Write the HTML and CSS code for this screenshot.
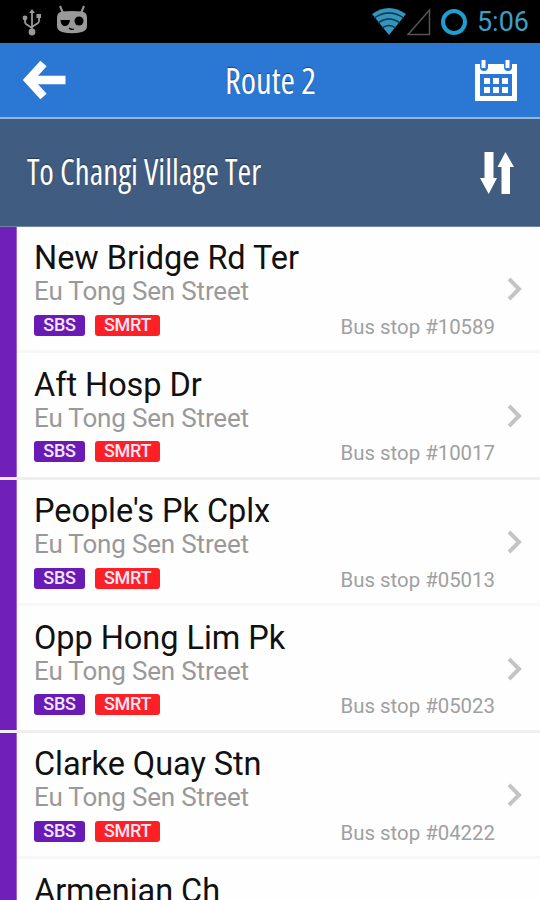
FILE: index.html
```html
<!DOCTYPE html>
<html lang="en">
<head>
    <meta charset="utf-8">
    <title>Route 2</title>
    <link rel="stylesheet" href="styles.css">
</head>
<body>
    <div class="status-bar">
        <svg class="usb-icon" width="20" height="28" viewBox="0 0 20 28" fill="none" stroke="#999" stroke-width="1.8">
            <path d="M10 4v19M3 10v4q0 1 1 2l6 4M17 7v6q0 1-1 2l-6 4"/>
            <path d="M10 1l3 4H7zM14.500 6H19v4h-4.500z" fill="#999" stroke="none"/>
            <circle cx="3" cy="10" r="2.400" fill="#999" stroke="none"/>
            <circle cx="10" cy="24" r="3.400" fill="#999" stroke="none"/>
        </svg>
        <svg class="cid-icon" width="32" height="30" viewBox="0 0 32 30">
            <path d="M4 1l3 7M28 1l-3 7" stroke="#999" stroke-width="2"/>
            <path d="M6 6.500q10-1 20 0 5 1 5 6v8q0 5-5 6.500-10 2.500-20 0-5-1.500-5-6.500v-8q0-5 5-6z" fill="#999"/>
            <path d="M4.500 15H14q-1 6-5 6t-4.500-6z"/>
            <circle cx="23" cy="16" r="4.500"/>
            <path d="M13 23q2 2 5 1" fill="none" stroke="#000" stroke-width="1.200"/>
        </svg>
        <div class="status-right">
            <svg width="36" height="28" viewBox="0 0 36 28">
                <path d="M1 6q17-12 34 0L18 27z" fill="#3494bd"/>
                <path d="M3 10q15-10 30 0M7 15q11-8 22 0M11 20q7-5 14 0" fill="none" stroke="#0b3444" stroke-width="1.300"/>
            </svg>
            <svg width="24" height="28" viewBox="0 0 24 28" fill="none" stroke="#555" stroke-width="1.500">
                <path d="M1 26.500L22.500 2v24.500z"/>
            </svg>
            <svg class="ring" width="28" height="28" viewBox="0 0 28 28" fill="none" stroke="#1f9fcf" stroke-width="4">
                <circle cx="14" cy="14" r="11"/>
            </svg>
            <span class="clock">5:06</span>
        </div>
    </div>

    <div class="header">
        <svg width="43" height="40" viewBox="0 0 43 40">
            <path d="M20.500 3.500L5.500 20l15 16.500M5 20h37.500" fill="none" stroke="#fff" stroke-width="8.500"/>
        </svg>
        <h1 class="condensed">Route 2</h1>
        <svg width="42" height="41" viewBox="0 0 42 41">
            <path d="M0 4h42v37H0z" fill="#fff"/>
            <path d="M5 14h32v22H5z" fill="#2b78d4"/>
            <path d="M5 0v7a4 4 0 0 0 8 0V0M29 0v7a4 4 0 0 0 8 0V0" fill="#2b78d4"/>
            <path d="M6.500 0h4v8h-4zM30.500 0h4v8h-4zM9 18h6v6H9zM18 18h6v6h-6zM27 18h6v6h-6zM9 27h6v6H9zM18 27h6v6h-6zM27 27h6v6h-6z" fill="#fff"/>
        </svg>
    </div>

    <div class="direction">
        <h2 class="condensed">To Changi Village Ter</h2>
        <svg width="34" height="42" viewBox="0 0 34 42" fill="#fff">
            <path d="M4.500 0h9v26H17L8.700 42 0 26h4.500zM21.500 42h8.500V15h4L25.500 0 17.500 15h4z"/>
        </svg>
    </div>

    <div class="stops" id="stops"></div>

    <script src="script.js"></script>
</body>
</html>
```
FILE: styles.css
```css
* {
    box-sizing: border-box;
}

body {
    margin: 0;
    width: 540px;
    height: 900px;
    overflow: hidden;
    background: #fefefe;
    font-family: Roboto, sans-serif;
}

.status-bar {
    display: flex;
    align-items: center;
    height: 43px;
    padding: 0 11px 0 22px;
    background: #000;
}

.usb-icon {
    margin-top: 1px;
}

.cid-icon {
    margin: -3px 0 0 14px;
}

.status-right {
    display: flex;
    align-items: center;
    margin-left: auto;
}

.ring {
    margin: 0 9px;
}

.clock {
    color: #3c9fc8;
    font-size: 27px;
    line-height: 43px;
    padding-top: 2px;
}

.header {
    display: flex;
    align-items: center;
    justify-content: space-between;
    height: 76px;
    padding: 0 23px;
    background: #2b78d4;
    border-bottom: 2px solid #94b5dd;
}

.condensed {
    margin: 0;
    color: #fff;
    font-family: "Open Sans", sans-serif;
    font-stretch: 75%;
    font-weight: 400;
    white-space: nowrap;
    text-shadow: 0 -1px 1px rgba(0,0,0,0.4);
}

.header h1 {
    font-size: 37px;
    padding-bottom: 2px;
    transform: scaleX(0.94);
}

.direction {
    display: flex;
    align-items: center;
    justify-content: space-between;
    height: 108px;
    padding: 0 26px;
    background: #405c80;
    border-bottom: 1px solid #6d85a2;
}

.direction h2 {
    font-size: 36px;
    font-weight: 500;
    padding: 0 0 2px 1px;
    transform: scaleX(0.92);
    transform-origin: left;
}

.stops {
    height: 673px;
    overflow: hidden;
}

.stop {
    position: relative;
    height: 126.6px;
    padding: 12px 45px 0 34px;
    background:
        linear-gradient(to right, #701fb8 16px, #c8a5e6 17px, transparent 17px),
        linear-gradient(to top, transparent 1px, #f7f7f7 1px, #f7f7f7 4px, transparent 4px);
}

.stop:nth-child(even) {
    border-bottom: 3px solid #efeff1;
    background: linear-gradient(to right, #701fb8 16px, #c8a5e6 17px, transparent 17px);
}

.name {
    font-size: 32.5px;
    line-height: 39px;
    letter-spacing: -0.05px;
    color: #111;
    white-space: nowrap;
}

.street {
    font-size: 26px;
    line-height: 27px;
    letter-spacing: -0.17px;
    color: #999;
}

.meta {
    display: flex;
    align-items: center;
    margin-top: 8px;
    height: 24px;
}

.badge {
    height: 21px;
    border-radius: 3px;
    color: #f3e6fa;
    font-size: 18px;
    font-weight: 500;
    letter-spacing: -0.3px;
    line-height: 20px;
    text-align: center;
}

.sbs {
    width: 51px;
    margin-right: 10px;
    background: #6a1bb5;
}

.smrt {
    width: 65px;
    background: #fd2025;
}

.number {
    margin-left: auto;
    padding-top: 3px;
    color: #a0a0a0;
    font-size: 20.4px;
}

.chevron {
    position: absolute;
    top: 50px;
    right: 17px;
}
```
FILE: script.js
```js
const stops = [
    ["New Bridge Rd Ter", "10589"],
    ["Aft Hosp Dr", "10017"],
    ["People's Pk Cplx", "05013"],
    ["Opp Hong Lim Pk", "05023"],
    ["Clarke Quay Stn", "04222"],
    ["Armenian Ch", ""]
];

function details(number) {
    return `
        <div class="street">Eu Tong Sen Street</div>
        <div class="meta">
            <span class="badge sbs">SBS</span>
            <span class="badge smrt">SMRT</span>
            <span class="number">Bus stop #${number}</span>
        </div>
        <svg class="chevron" width="16" height="24" viewBox="0 0 16 24" fill="none" stroke="#c4c4c4" stroke-width="4">
            <path d="M2 2l10 10L2 22"/>
        </svg>`;
}

document.getElementById("stops").innerHTML = stops.map(([name, number]) => `
    <div class="stop">
        <div class="name">${name}</div>
        ${number ? details(number) : ""}
    </div>`).join("");
```
